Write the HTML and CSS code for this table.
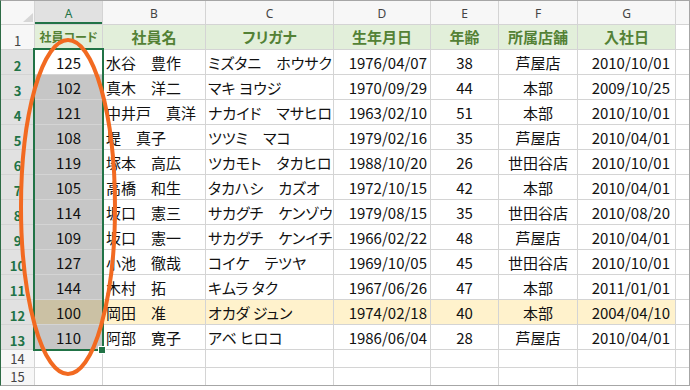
FILE: index.html
```html
<!DOCTYPE html>
<html lang="ja">
<head>
<meta charset="utf-8">
<link rel="stylesheet" href="styles.css">
</head>
<body>
<div class="sheet">
  <div class="corner"><span class="tri"></span></div>
  <div class="ch sel">A</div><div class="ch">B</div><div class="ch">C</div><div class="ch">D</div><div class="ch">E</div><div class="ch">F</div><div class="ch">G</div><div class="ch"></div>

  <div class="rh">1</div>
  <div class="c hd small">社員コード</div><div class="c hd">社員名</div><div class="c hd">フリガナ</div><div class="c hd">生年月日</div><div class="c hd">年齢</div><div class="c hd">所属店舗</div><div class="c hd">入社日</div><div class="c"></div>

  <div class="rh sel">2</div>
  <div class="c ctr active">125</div><div class="c l">水谷　豊作</div><div class="c k">ミズタニ　ホウサク</div><div class="c r">1976/04/07</div><div class="c ctr">38</div><div class="c ctr">芦屋店</div><div class="c r g">2010/10/01</div><div class="c"></div>

  <div class="rh sel">3</div>
  <div class="c ctr asel">102</div><div class="c l">真木　洋二</div><div class="c k">マキ ヨウジ</div><div class="c r">1970/09/29</div><div class="c ctr">44</div><div class="c ctr">本部</div><div class="c r g">2009/10/25</div><div class="c"></div>

  <div class="rh sel">4</div>
  <div class="c ctr asel">121</div><div class="c l">中井戸　真洋</div><div class="c k">ナカイド　マサヒロ</div><div class="c r">1963/02/10</div><div class="c ctr">51</div><div class="c ctr">本部</div><div class="c r g">2010/10/01</div><div class="c"></div>

  <div class="rh sel">5</div>
  <div class="c ctr asel">108</div><div class="c l">堤　真子</div><div class="c k">ツツミ　マコ</div><div class="c r">1979/02/16</div><div class="c ctr">35</div><div class="c ctr">芦屋店</div><div class="c r g">2010/04/01</div><div class="c"></div>

  <div class="rh sel">6</div>
  <div class="c ctr asel">119</div><div class="c l">塚本　高広</div><div class="c k">ツカモト　タカヒロ</div><div class="c r">1988/10/20</div><div class="c ctr">26</div><div class="c ctr">世田谷店</div><div class="c r g">2010/10/01</div><div class="c"></div>

  <div class="rh sel">7</div>
  <div class="c ctr asel">105</div><div class="c l">高橋　和生</div><div class="c k">タカハシ　カズオ</div><div class="c r">1972/10/15</div><div class="c ctr">42</div><div class="c ctr">本部</div><div class="c r g">2010/04/01</div><div class="c"></div>

  <div class="rh sel">8</div>
  <div class="c ctr asel">114</div><div class="c l">坂口　憲三</div><div class="c k">サカグチ　ケンゾウ</div><div class="c r">1979/08/15</div><div class="c ctr">35</div><div class="c ctr">世田谷店</div><div class="c r g">2010/08/20</div><div class="c"></div>

  <div class="rh sel">9</div>
  <div class="c ctr asel">109</div><div class="c l">坂口　憲一</div><div class="c k">サカグチ　ケンイチ</div><div class="c r">1966/02/22</div><div class="c ctr">48</div><div class="c ctr">芦屋店</div><div class="c r g">2010/04/01</div><div class="c"></div>

  <div class="rh sel">10</div>
  <div class="c ctr asel">127</div><div class="c l">小池　徹哉</div><div class="c k">コイケ　テツヤ</div><div class="c r">1969/10/05</div><div class="c ctr">45</div><div class="c ctr">世田谷店</div><div class="c r g">2010/10/01</div><div class="c"></div>

  <div class="rh sel">11</div>
  <div class="c ctr asel">144</div><div class="c l">木村　拓</div><div class="c k">キムラ タク</div><div class="c r">1967/06/26</div><div class="c ctr">47</div><div class="c ctr">本部</div><div class="c r g">2011/01/01</div><div class="c"></div>

  <div class="rh sel">12</div>
  <div class="c ctr asel hlsel">100</div><div class="c l hl">岡田　准</div><div class="c k hl">オカダ ジュン</div><div class="c r hl">1974/02/18</div><div class="c ctr hl">40</div><div class="c ctr hl">本部</div><div class="c r g hl">2004/04/10</div><div class="c"></div>

  <div class="rh sel">13</div>
  <div class="c ctr asel">110</div><div class="c l">阿部　寛子</div><div class="c k">アベ ヒロコ</div><div class="c r">1986/06/04</div><div class="c ctr">28</div><div class="c ctr">芦屋店</div><div class="c r g">2010/04/01</div><div class="c"></div>

  <div class="rh">14</div>
  <div class="c"></div><div class="c"></div><div class="c"></div><div class="c"></div><div class="c"></div><div class="c"></div><div class="c"></div><div class="c"></div>

  <div class="rh">15</div>
  <div class="c"></div><div class="c"></div><div class="c"></div><div class="c"></div><div class="c"></div><div class="c"></div><div class="c"></div><div class="c"></div>

  <div class="selection"></div>
  <div class="handle"></div>
  <svg class="mark" width="688" height="384" viewBox="0 0 688 384">
    <ellipse cx="67" cy="206" rx="47" ry="167" fill="none" stroke="#f26a21" stroke-width="4"/>
  </svg>
</div>
</body>
</html>
```

FILE: styles.css
```css
* { box-sizing: border-box; }

html, body {
  margin: 0;
  padding: 0;
  background: #ffffff;
}

body {
  width: 690px;
  height: 390px;
  overflow: hidden;
  font-family: "Noto Sans CJK JP", "Noto Sans", sans-serif;
}

.sheet {
  position: relative;
  display: grid;
  grid-template-columns: 33px 67px 102px 127px 96px 67px 78px 97px 13px;
  grid-template-rows: 23px repeat(13, 24px) 17px 17px;
  gap: 1px;
  width: 690px;
  background: #d4d4d4;
  border: 1px solid #a6a6a6;
  border-left-color: #2d6b45;
}

.corner {
  background: #f7f7f7;
  display: flex;
  justify-content: flex-end;
  align-items: flex-end;
  padding: 0 1px 2px 0;
}

.tri {
  width: 10px;
  height: 9px;
  background: #d6d6d6;
  clip-path: polygon(100% 0, 100% 100%, 0 100%);
}

.ch {
  background: #f7f7f7;
  color: #444444;
  font-family: "Noto Sans", sans-serif;
  font-size: 12px;
  display: flex;
  align-items: center;
  justify-content: center;
  padding-top: 1px;
}

.ch.sel {
  background: #e1e1e1;
  color: #217346;
  box-shadow: inset 0 -2px 0 #217346;
}

.rh {
  background: #f7f7f7;
  color: #444444;
  font-size: 13px;
  line-height: 14px;
  display: flex;
  align-items: flex-end;
  justify-content: center;
  padding-bottom: 1px;
}

.rh.sel {
  background: #e1e1e1;
  color: #217346;
  font-weight: 700;
}

.c {
  background: #ffffff;
  color: #111111;
  font-size: 15px;
  line-height: 18px;
  display: flex;
  align-items: center;
  white-space: nowrap;
  overflow: hidden;
  font-feature-settings: "palt";
  padding-top: 2px;
}

.hd {
  background: #e2efda;
  color: #538135;
  font-weight: 700;
  justify-content: center;
  padding-top: 0;
}

.hd.small {
  font-size: 12px;
}

.l { padding-left: 3px; }
.k { padding-left: 2px; }
.r { justify-content: flex-end; padding-right: 3px; }
.r.g { padding-right: 5px; }
.ctr { justify-content: center; }

.hl { background: #fff2cc; }
.asel { background: #c6c6c6; }
.asel.hlsel { background: #cbc1a4; }
.active { background: #ffffff; }

.selection {
  position: absolute;
  left: 32px;
  top: 47px;
  width: 71px;
  height: 303px;
  border: 2px solid #217346;
}

.handle {
  position: absolute;
  left: 98px;
  top: 346px;
  width: 6px;
  height: 6px;
  background: #217346;
  outline: 1px solid #ffffff;
}

.mark {
  position: absolute;
  left: 0;
  top: 0;
  pointer-events: none;
}
```
